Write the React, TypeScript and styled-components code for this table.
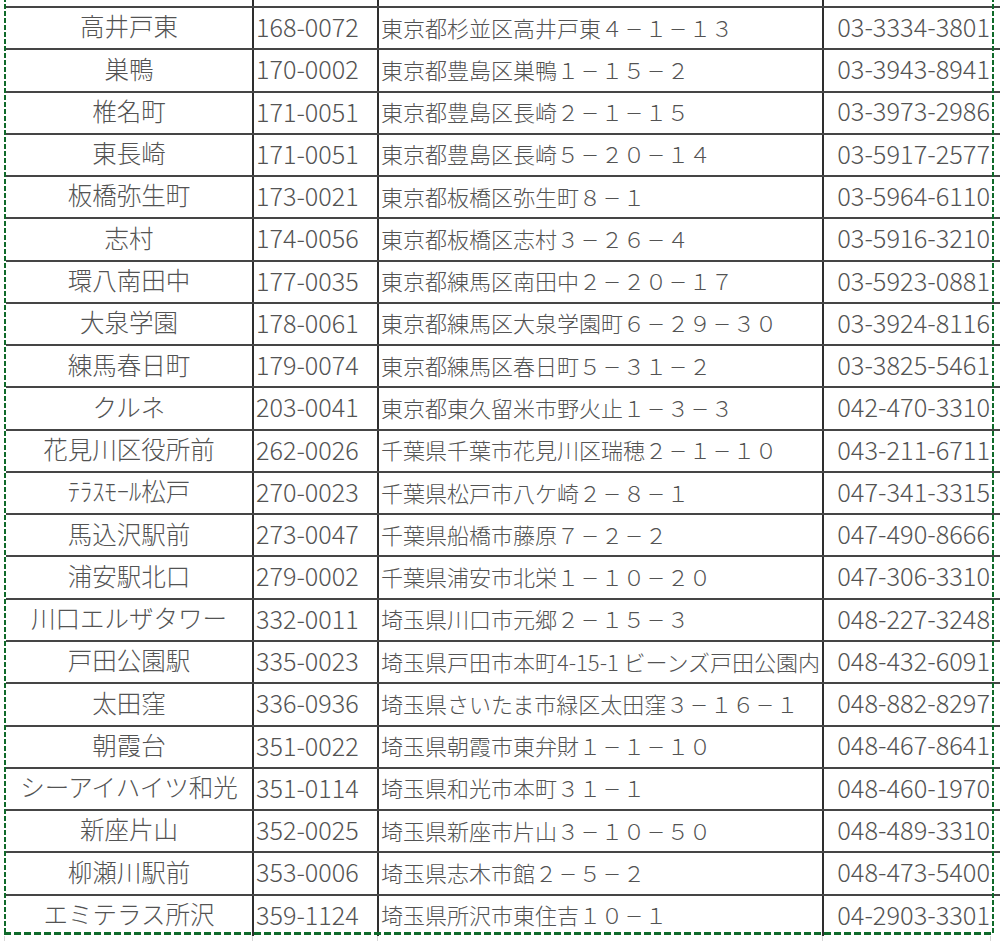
import React from "react";
import styled, { createGlobalStyle } from "styled-components";

const GlobalStyle = createGlobalStyle`
  html, body { margin: 0; padding: 0; background: #ffffff; }
  body { font-family: "Noto Sans CJK JP", "Noto Sans", sans-serif; }
`;

const COLS = "248px 125px 445px 168px";
const GRID_DARK = "#2e2e2e";
const ROW_LINE = "#454545";
const LIGHT = "#d6d6d6";
const ANT = "#0f6a2a";

type Align = "center" | "left" | "right";

const Page = styled.div`
  position: relative;
  width: 1000px;
  height: 941px;
  overflow: hidden;
  background: #ffffff;
`;

const Sheet = styled.div`
  display: flex;
  flex-direction: column;
  padding-left: 6px;
`;

const Strip = styled.div<{ $h: number }>`
  display: grid;
  grid-template-columns: ${COLS};
  height: ${(p) => p.$h}px;
`;

const StripCell = styled.div<{ $light?: boolean; $last?: boolean }>`
  box-sizing: border-box;
  border-right: ${(p) =>
    p.$last && !p.$light ? "none" : `${p.$light ? 1 : 2}px solid ${p.$light ? LIGHT : GRID_DARK}`};
`;

const BottomStrip = styled(Strip)`
  margin-left: -2px;
  border-left: 1px solid ${LIGHT};
`;

const Row = styled.div`
  display: grid;
  grid-template-columns: ${COLS};
  height: 42.28px;
  box-sizing: border-box;
  border-top: 2px solid ${ROW_LINE};
`;

const Cell = styled.div<{ $align: Align; $size: number; $last?: boolean }>`
  display: flex;
  align-items: center;
  justify-content: ${(p) =>
    p.$align === "center" ? "center" : p.$align === "left" ? "flex-start" : "flex-end"};
  box-sizing: border-box;
  border-right: ${(p) => (p.$last ? "none" : `2px solid ${GRID_DARK}`)};
  padding: 0 2px 3px 2px;
  font-size: ${(p) => p.$size}px;
  font-weight: 300;
  line-height: 1;
  color: #535353;
  white-space: nowrap;
  overflow: visible;
`;

const Dash = styled.span`
  display: inline-block;
  width: 1em;
  text-align: center;
  transform: scaleX(0.8);
`;

const Marquee = styled.div`
  position: absolute;
  left: 4px;
  top: -10px;
  width: 990px;
  height: 945px;
  pointer-events: none;
  background:
    repeating-linear-gradient(to bottom, ${ANT} 0 5px, transparent 5px 7px) left top / 2px 100% no-repeat,
    repeating-linear-gradient(to bottom, ${ANT} 0 5px, transparent 5px 7px) right top / 2px 100% no-repeat,
    repeating-linear-gradient(to right, ${ANT} 0 7px, transparent 7px 10px) left bottom / 100% 3px no-repeat;
`;

const rows: [string, string, string, string][] = [
  ["高井戸東", "168-0072", "東京都杉並区高井戸東４－１－１３", "03-3334-3801"],
  ["巣鴨", "170-0002", "東京都豊島区巣鴨１－１５－２", "03-3943-8941"],
  ["椎名町", "171-0051", "東京都豊島区長崎２－１－１５", "03-3973-2986"],
  ["東長崎", "171-0051", "東京都豊島区長崎５－２０－１４", "03-5917-2577"],
  ["板橋弥生町", "173-0021", "東京都板橋区弥生町８－１", "03-5964-6110"],
  ["志村", "174-0056", "東京都板橋区志村３－２６－４", "03-5916-3210"],
  ["環八南田中", "177-0035", "東京都練馬区南田中２－２０－１７", "03-5923-0881"],
  ["大泉学園", "178-0061", "東京都練馬区大泉学園町６－２９－３０", "03-3924-8116"],
  ["練馬春日町", "179-0074", "東京都練馬区春日町５－３１－２", "03-3825-5461"],
  ["クルネ", "203-0041", "東京都東久留米市野火止１－３－３", "042-470-3310"],
  ["花見川区役所前", "262-0026", "千葉県千葉市花見川区瑞穂２－１－１０", "043-211-6711"],
  ["ﾃﾗｽﾓｰﾙ松戸", "270-0023", "千葉県松戸市八ケ崎２－８－１", "047-341-3315"],
  ["馬込沢駅前", "273-0047", "千葉県船橋市藤原７－２－２", "047-490-8666"],
  ["浦安駅北口", "279-0002", "千葉県浦安市北栄１－１０－２０", "047-306-3310"],
  ["川口エルザタワー", "332-0011", "埼玉県川口市元郷２－１５－３", "048-227-3248"],
  ["戸田公園駅", "335-0023", "埼玉県戸田市本町4-15-1 ビーンズ戸田公園内", "048-432-6091"],
  ["太田窪", "336-0936", "埼玉県さいたま市緑区太田窪３－１６－１", "048-882-8297"],
  ["朝霞台", "351-0022", "埼玉県朝霞市東弁財１－１－１０", "048-467-8641"],
  ["シーアイハイツ和光", "351-0114", "埼玉県和光市本町３１－１", "048-460-1970"],
  ["新座片山", "352-0025", "埼玉県新座市片山３－１０－５０", "048-489-3310"],
  ["柳瀬川駅前", "353-0006", "埼玉県志木市館２－５－２", "048-473-5400"],
  ["エミテラス所沢", "359-1124", "埼玉県所沢市東住吉１０－１", "04-2903-3301"],
];

function renderAddress(addr: string) {
  return addr.split(/(－)/).map((part, i) =>
    part === "－" ? <Dash key={i}>－</Dash> : <React.Fragment key={i}>{part}</React.Fragment>
  );
}

export default function App() {
  return (
    <Page>
      <GlobalStyle />
      <Sheet>
        <Strip $h={6}>
          <StripCell />
          <StripCell />
          <StripCell />
          <StripCell $last />
        </Strip>
        {rows.map(([name, zip, addr, tel], i) => (
          <Row key={i}>
            <Cell $align="center" $size={24.5}>{name}</Cell>
            <Cell $align="left" $size={25.2}>{zip}</Cell>
            <Cell $align="left" $size={22}>{renderAddress(addr)}</Cell>
            <Cell $align="right" $size={25.4} $last>{tel}</Cell>
          </Row>
        ))}
        <BottomStrip $h={10}>
          <StripCell $light />
          <StripCell $light />
          <StripCell $light />
          <StripCell $light $last />
        </BottomStrip>
      </Sheet>
      <Marquee />
    </Page>
  );
}
